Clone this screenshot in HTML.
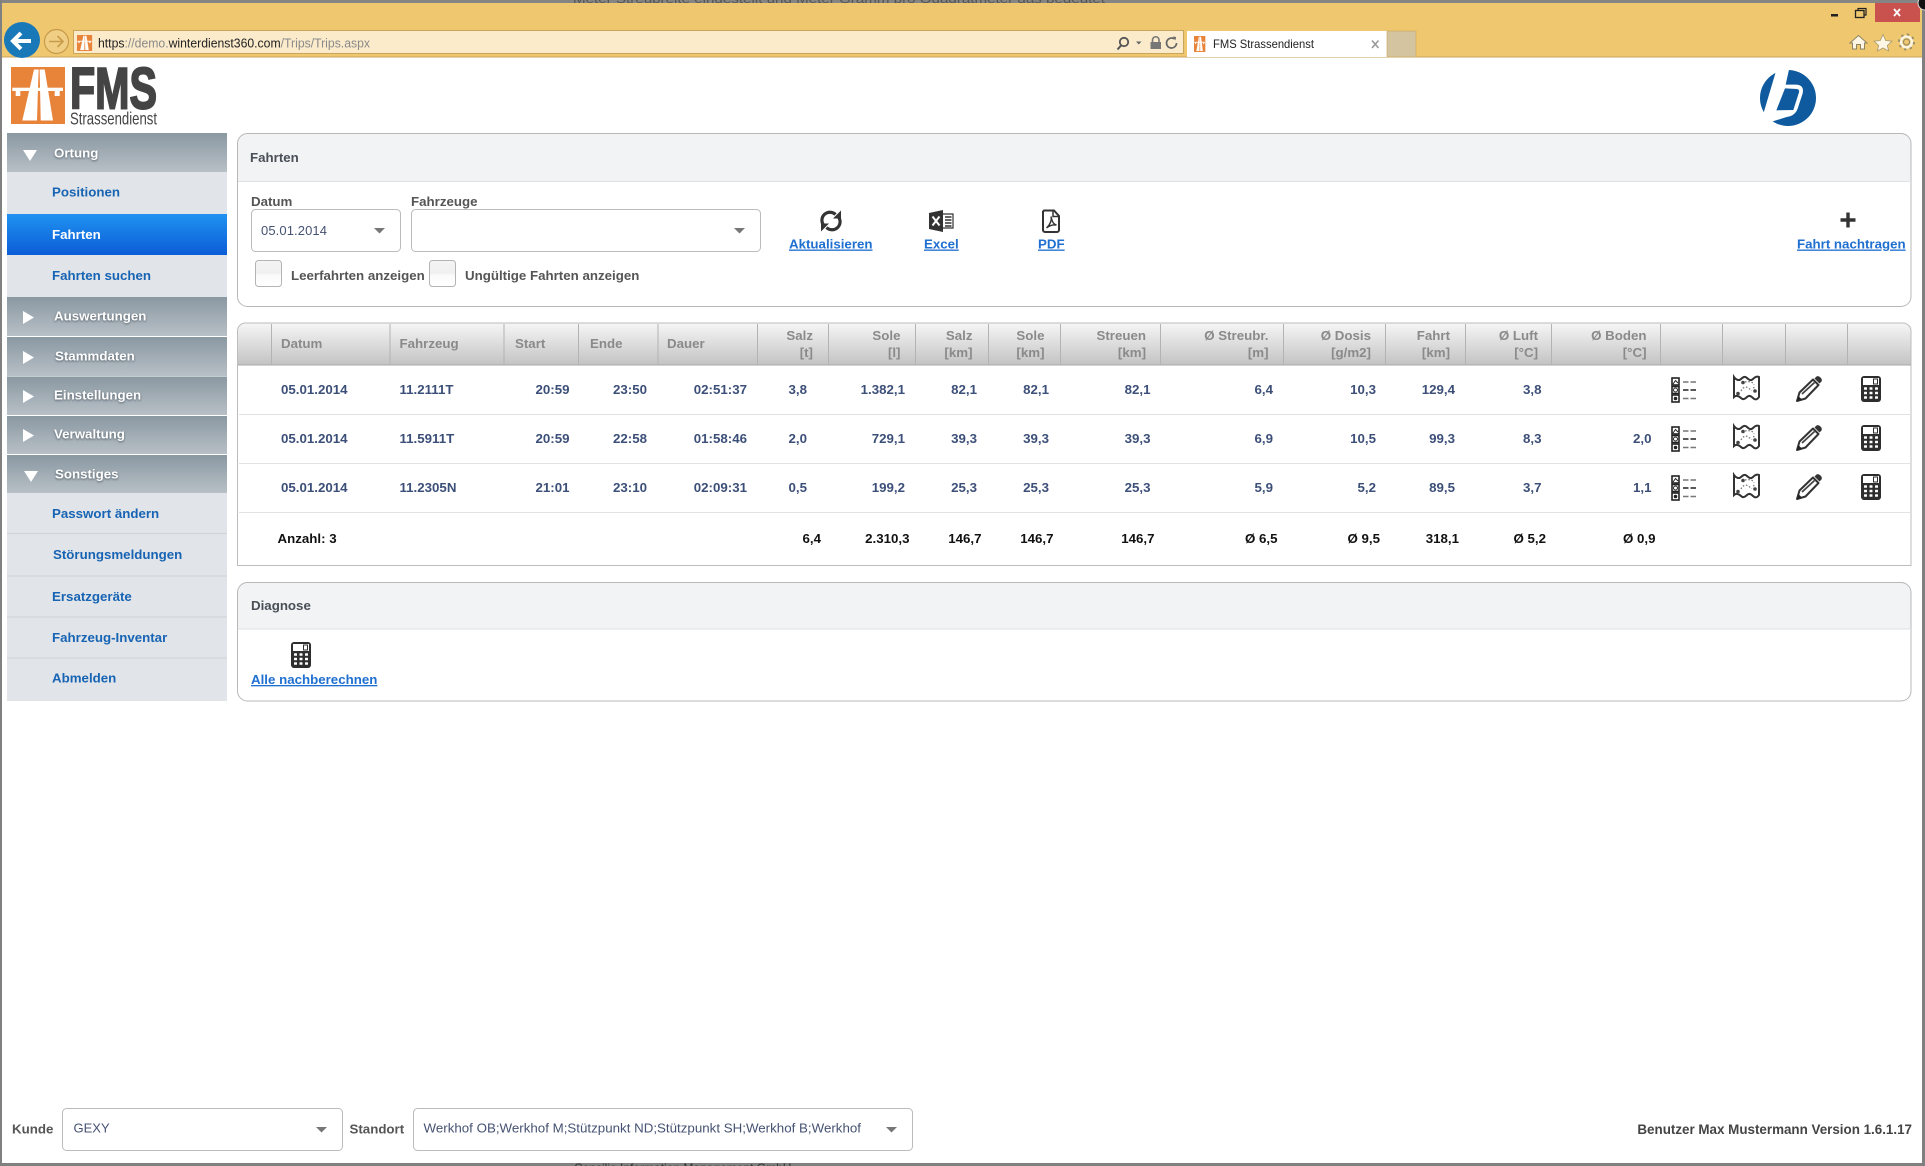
<!DOCTYPE html>
<html lang="de">
<head>
<meta charset="utf-8">
<title>FMS Strassendienst</title>
<style>
html,body{margin:0;padding:0;background:#fff;width:1925px;height:1166px;overflow:hidden}
svg{display:block;font-family:"Liberation Sans",Arial,sans-serif}
.b{font-weight:bold;font-size:13.3px}
.nav{fill:#1764b4}
.hd{fill:#fff;filter:drop-shadow(0 1px 1px rgba(50,60,70,.7))}
.th{fill:#8a8a8a}
.td{fill:#3c4f78}
.lk{fill:#1f6fd0;text-decoration:underline}
.lab{fill:#555}
.val{fill:#465273;font-size:13px}
</style>
</head>
<body>
<svg xmlns="http://www.w3.org/2000/svg" width="1925" height="1166" viewBox="0 0 1925 1166">
<defs>
<linearGradient id="gH" x1="0" y1="0" x2="0" y2="1"><stop offset="0" stop-color="#8a98a2"/><stop offset="1" stop-color="#b8c0c6"/></linearGradient>
<linearGradient id="gA" x1="0" y1="0" x2="0" y2="1"><stop offset="0" stop-color="#2092f2"/><stop offset="1" stop-color="#0b5dd6"/></linearGradient>
<linearGradient id="gT" x1="0" y1="0" x2="0" y2="1"><stop offset="0" stop-color="#f6f6f6"/><stop offset="1" stop-color="#c3c3c3"/></linearGradient>
<linearGradient id="gC" x1="0" y1="0" x2="0" y2="1"><stop offset="0" stop-color="#f4f4f4"/><stop offset=".5" stop-color="#f0f0f0"/><stop offset=".55" stop-color="#fafafa"/><stop offset="1" stop-color="#fff"/></linearGradient>
<g id="road">
<rect x="0" y="0" width="54" height="57" fill="#e8833a"/>
<path d="M23 2.500H33.700L42 53.500H11.300Z" fill="#fff"/>
<rect x="1.300" y="20.700" width="50.700" height="3.300" fill="#fff"/>
<rect x="4.700" y="24" width="4.600" height="5" fill="#fff"/>
<rect x="43.700" y="24" width="5" height="5" fill="#fff"/>
<path d="M27.700 2.500H28.600L29 20.700H27Z" fill="#e8833a"/>
<path d="M26.900 24H29.100L29.700 53.500H26Z" fill="#e8833a"/>
</g>
<g id="ilist">
<rect x="1" y="1" width="7" height="7" fill="#fff" stroke="#222" stroke-width="1.600"/>
<path d="M2 7L4.500 3.500 7 6" stroke="#222" fill="none"/>
<rect x="1" y="9.500" width="7" height="7" fill="#fff" stroke="#222" stroke-width="1.600"/>
<circle cx="4.500" cy="13" r="2" fill="none" stroke="#222"/>
<rect x="1" y="18" width="7" height="7" fill="#fff" stroke="#222" stroke-width="1.600"/>
<circle cx="4.500" cy="21.500" r="1.800" fill="#222"/>
<path d="M12 5H17.500M19.500 5H25" stroke="#777" stroke-width="1.400"/>
<path d="M12 13H17.500M19.500 13H25" stroke="#222" stroke-width="1.400"/>
<path d="M12 21.500H17.500M19.500 21.500H25" stroke="#777" stroke-width="1.400"/>
</g>
<g id="imap">
<path d="M1 2C3 5 6 6 8 4S12 1 14 3S18 6 20 4S24 1 26 2L26 22C24 25 22 25 20 23S16 20 14 22S10 25 8 23S3 20 1 22Z" fill="#fff" stroke="#333" stroke-width="2"/>
<circle cx="10" cy="7.500" r="1.800" fill="#444"/><circle cx="22" cy="16" r="1.800" fill="#444"/><circle cx="5" cy="18.500" r="1.800" fill="#444"/>
<path d="M12 7C17 6 20 7 21 10M20.500 12L21.500 14M8 16C10 12 13 11 16 13.500L19 15.500" fill="none" stroke="#777" stroke-width="1.300" stroke-dasharray="1.500 1.800"/>
</g>
<g id="ipen">
<path d="M1 25L3.500 16.500 17 3.500 22.500 9 9.500 22.500Z" fill="#fff" stroke="#333" stroke-width="2" stroke-linejoin="round"/>
<path d="M6 18L18.500 6.500" stroke="#444" stroke-width="1.800"/>
<path d="M1 25L2.400 20 6 23.600Z" fill="#222"/>
<path d="M18.500 2.500L20.500 0.500Q22.500 -0.500 24.500 1.500Q26.500 3.500 25.500 5.500L23.500 7.500Z" fill="#333"/>
</g>
<g id="icalc">
<rect x="0" y="0" width="20" height="26" rx="3" fill="#2e2e2e"/>
<rect x="2" y="2" width="16" height="7" fill="#fff"/>
<rect x="12.500" y="3" width="4" height="5" fill="#fff" stroke="#2e2e2e" stroke-width="1"/>
<g fill="#fff">
<rect x="3" y="11.200" width="3" height="2.600" rx=".6"/><rect x="8.500" y="11.200" width="3" height="2.600" rx=".6"/><rect x="14" y="11.200" width="3" height="2.600" rx=".6"/>
<rect x="3" y="15.700" width="3" height="2.600" rx=".6"/><rect x="8.500" y="15.700" width="3" height="2.600" rx=".6"/><rect x="14" y="15.700" width="3" height="2.600" rx=".6"/>
<rect x="3" y="20.200" width="3" height="2.600" rx=".6"/><rect x="8.500" y="20.200" width="3" height="2.600" rx=".6"/><rect x="14" y="20.200" width="3" height="2.600" rx=".6"/>
</g>
</g>
<g id="rowicons">
<use href="#ilist" x="1671" y="377"/>
<use href="#imap" x="1733" y="375"/>
<use href="#ipen" x="1796" y="376"/>
<use href="#icalc" x="1861" y="376"/>
</g>
<clipPath id="cBot"><rect x="0" y="1163" width="1925" height="3"/></clipPath>
<clipPath id="cTop"><rect x="0" y="0" width="1925" height="3"/></clipPath>
</defs>

<!-- window frame -->
<rect width="1925" height="1166" fill="#fff"/>
<rect x="0" y="0" width="1925" height="3" fill="#858585"/>
<text x="573" y="3" font-size="12" fill="#555" clip-path="url(#cTop)" textLength="532" lengthAdjust="spacingAndGlyphs">Meter Streubreite eingestellt und Meter Gramm pro Quadratmeter das bedeutet</text>
<rect x="0" y="0" width="2" height="1166" fill="#808080"/>
<rect x="1922" y="0" width="3" height="1166" fill="#808080"/>
<rect x="0" y="1163" width="1925" height="3" fill="#808080"/>
<text x="574" y="1172" font-size="12" fill="#333" clip-path="url(#cBot)">Consilio Information Management GmbH</text>

<!-- browser chrome -->
<rect x="2" y="3" width="1920" height="54" fill="#efc76f"/>
<rect x="2" y="56.500" width="1920" height="1" fill="#c9a65a"/>
<circle cx="22" cy="40" r="18" fill="#1878b8"/>
<path d="M13 41H31M21 33L13 41 21 49" fill="none" stroke="#fff" stroke-width="4"/>
<circle cx="56.500" cy="41.500" r="12" fill="#f0cf85" stroke="#c79b4a" stroke-width="1.200"/>
<path d="M49 41.500H63M57.500 36L63 41.500 57.500 47" fill="none" stroke="#c79b4a" stroke-width="1.600"/>
<rect x="73.500" y="30.500" width="1110" height="23" fill="#fbebcb" stroke="#c9a65a"/>
<use href="#road" transform="translate(77 35) scale(.28)"/>
<text x="98" y="47.500" font-size="12.500" textLength="272" lengthAdjust="spacingAndGlyphs" fill="#8a8a8a"><tspan fill="#222">https</tspan>://demo.<tspan fill="#222">winterdienst360.com</tspan>/Trips/Trips.aspx</text>
<circle cx="1124" cy="42" r="4.200" fill="none" stroke="#555" stroke-width="1.800"/>
<path d="M1121 45.500L1117.500 49.500" stroke="#555" stroke-width="2"/>
<path d="M1136 41.500h5.500l-2.750 3z" fill="#666"/>
<rect x="1150.500" y="42" width="10.500" height="7" fill="#777"/>
<path d="M1152.500 42V40a3.200 3.200 0 0 1 6.500 0V42" fill="none" stroke="#777" stroke-width="1.600"/>
<path d="M1176.500 43a5 5 0 1 1-2-4" fill="none" stroke="#666" stroke-width="1.700"/>
<path d="M1173 36.500l3 .5-.5 3.500z" fill="#666"/>
<rect x="1187" y="31" width="200" height="26" fill="#fff"/>
<rect x="1387" y="31" width="29" height="26" fill="#d4c49f" stroke="#c9a65a" stroke-width=".6"/>
<use href="#road" transform="translate(1194 36) scale(.21 .28)"/>
<text x="1213" y="48" font-size="12" textLength="101" lengthAdjust="spacingAndGlyphs" fill="#222">FMS Strassendienst</text>
<path d="M1372 40.500L1378.500 48M1378.500 40.500L1372 48" stroke="#999" stroke-width="1.600"/>
<rect x="1831" y="14" width="7" height="2.500" fill="#222"/>
<rect x="1855.500" y="10.500" width="8.500" height="7" fill="none" stroke="#222" stroke-width="1.300"/>
<path d="M1858 10.500V8.500H1866V15H1864" fill="none" stroke="#222" stroke-width="1.200"/>
<rect x="1875" y="3" width="45" height="19" fill="#c9524f"/>
<path d="M1894 9L1900 16M1900 9L1894 16" stroke="#fff" stroke-width="1.800"/>
<circle cx="1925" cy="3" r="7" fill="#111" stroke="#ddd" stroke-width="1"/>
<path d="M1850 43L1858.500 35.500 1867 43 1864.500 43 1864.500 49 1860.500 49 1860.500 44.500 1856.500 44.500 1856.500 49 1852.500 49 1852.500 43Z" fill="#fdf6e4" stroke="#8d8566" stroke-width="1"/>
<path d="M1883 34.500L1885.700 40.500 1892 41.200 1887.300 45.500 1888.700 51 1883 48 1877.300 51 1878.700 45.500 1874 41.200 1880.300 40.500Z" fill="#fdf6e4" stroke="#a99b70" stroke-width=".8"/>
<circle cx="1906.500" cy="42" r="5.500" fill="none" stroke="#fdf6e4" stroke-width="2.500"/>
<circle cx="1906.500" cy="42" r="7.500" fill="none" stroke="#9d9068" stroke-width="2" stroke-dasharray="2.500 3.400"/>
<circle cx="1906.500" cy="42" r="3" fill="none" stroke="#8d8566" stroke-width="1"/>

<!-- logo -->
<use href="#road" transform="translate(11 67)"/>
<text x="70" y="108.500" font-size="58" font-weight="bold" fill="#444" stroke="#444" stroke-width="2" textLength="87" lengthAdjust="spacingAndGlyphs">FMS</text>
<text x="70" y="124.500" font-size="17.500" fill="#444" textLength="87" lengthAdjust="spacingAndGlyphs">Strassendienst</text>
<g transform="translate(1740 60) scale(.3333)">
<circle cx="144" cy="114" r="84" fill="#0f5a9e"/>
<path d="M112 20L149 20 137 74 170 74Q193 76 188 100L173 146Q165 168 140 171L92 186 68 168Z" fill="#fff"/>
<path d="M135 85L172 87Q179 90 177 97L160 150 109 151Z" fill="#0f5a9e"/>
</g>

<!-- sidebar -->
<rect x="7" y="133" width="220" height="39" fill="url(#gH)"/>
<rect x="7" y="172" width="220" height="42" fill="#e1e4e8"/>
<rect x="7" y="214" width="220" height="41" fill="url(#gA)"/>
<rect x="7" y="255" width="220" height="42" fill="#e1e4e8"/>
<rect x="7" y="297" width="220" height="39" fill="url(#gH)"/>
<rect x="7" y="337" width="220" height="39" fill="url(#gH)"/>
<rect x="7" y="376.500" width="220" height="38.500" fill="url(#gH)"/>
<rect x="7" y="416" width="220" height="38" fill="url(#gH)"/>
<rect x="7" y="455" width="220" height="38" fill="url(#gH)"/>
<rect x="7" y="493" width="220" height="208" fill="#e1e4e8"/>
<g fill="#d0d3d6">
<rect x="7" y="533" width="220" height="1"/><rect x="7" y="575.500" width="220" height="1"/><rect x="7" y="616.500" width="220" height="1"/><rect x="7" y="657.500" width="220" height="1"/>
</g>
<g fill="#fff">
<path d="M23 150H37L30 161Z"/>
<path d="M23 311L34 317.500 23 324Z"/>
<path d="M23 351L34 357.500 23 364Z"/>
<path d="M23 390L34 396.500 23 403Z"/>
<path d="M23 429L34 435.500 23 442Z"/>
<path d="M24 471H38L31 482Z"/>
</g>
<g class="b hd">
<text x="54" y="157.500">Ortung</text>
<text x="54" y="320.500">Auswertungen</text>
<text x="55" y="360.500">Stammdaten</text>
<text x="54" y="399.500">Einstellungen</text>
<text x="54" y="438.500">Verwaltung</text>
<text x="55" y="478.500">Sonstiges</text>
</g>
<g class="b nav">
<text x="52" y="196.500">Positionen</text>
<text x="52" y="280">Fahrten suchen</text>
<text x="52" y="518">Passwort ändern</text>
<text x="53" y="559">Störungsmeldungen</text>
<text x="52" y="601">Ersatzgeräte</text>
<text x="52" y="642">Fahrzeug-Inventar</text>
<text x="52" y="682.500">Abmelden</text>
</g>
<text x="52" y="239" class="b" fill="#fff">Fahrten</text>

<!-- Fahrten panel -->
<path d="M238 181V143a10 10 0 0 1 10-10H1901a10 10 0 0 1 10 10V181Z" fill="#f1f3f5"/>
<rect x="237.500" y="133.500" width="1673.500" height="173" rx="10" fill="none" stroke="#b8b8b8"/>
<rect x="238" y="181" width="1673" height="1" fill="#dfe2e4"/>
<text x="250" y="162" class="b" fill="#4a4f57">Fahrten</text>
<text x="251" y="206" class="b lab">Datum</text>
<text x="411" y="206" class="b lab">Fahrzeuge</text>
<rect x="251.500" y="209.500" width="149" height="42" rx="4" fill="#fff" stroke="#bbb"/>
<text x="261" y="235" class="val" textLength="66" lengthAdjust="spacing">05.01.2014</text>
<path d="M374 228H385L379.500 233.500Z" fill="#777"/>
<rect x="411.500" y="209.500" width="349" height="42" rx="4" fill="#fff" stroke="#bbb"/>
<path d="M734 228H745L739.500 233.500Z" fill="#777"/>
<rect x="255.500" y="260.500" width="26" height="26" rx="3" fill="url(#gC)" stroke="#b4b4b4"/>
<rect x="429.500" y="260.500" width="26" height="26" rx="3" fill="url(#gC)" stroke="#b4b4b4"/>
<text x="291" y="280" class="b lab">Leerfahrten anzeigen</text>
<text x="465" y="280" class="b lab">Ungültige Fahrten anzeigen</text>

<!-- toolbar -->
<g fill="#333">
<path d="M823.500 225A8 8 0 0 1 835.500 214.500M838.500 217A8 8 0 0 1 826.500 227.500" fill="none" stroke="#333" stroke-width="3.200"/>
<path d="M841 218.500V210.500L833 218.500Z"/>
<path d="M821 223.500V231.500L829 223.500Z"/>
<path d="M929 213L943 210V232L929 229Z"/>
</g>
<path d="M932.500 216.500L939.500 225.500M939.500 216.500L932.500 225.500" stroke="#fff" stroke-width="2"/>
<path d="M943 214H953V228H943" fill="#fff" stroke="#333" stroke-width="1.200"/>
<path d="M945 217H951.500M945 220H951.500M945 223H951.500M945 226H951.500" stroke="#333" stroke-width="1.600"/>
<path d="M1044 210.500H1054L1059 216V230a2 2 0 0 1-2 2H1045a2 2 0 0 1-2-2V211.500Z" fill="#fff" stroke="#333" stroke-width="2"/>
<path d="M1053 210.500V216.500H1059" fill="none" stroke="#333" stroke-width="1.500"/>
<path d="M1046.500 228C1050 225 1052 220 1051 216.500C1052 221 1053 224 1056.500 225C1053 224.500 1049.500 225.500 1046.500 228Z" fill="none" stroke="#333" stroke-width="1.400"/>
<path d="M1848 212.500V227.500M1840.500 220H1855.500" stroke="#333" stroke-width="3.400"/>
<text x="789" y="248.500" class="b lk">Aktualisieren</text>
<text x="924" y="248.500" class="b lk">Excel</text>
<text x="1038" y="248.500" class="b lk">PDF</text>
<text x="1797" y="248.500" class="b lk">Fahrt nachtragen</text>

<!-- table -->
<path d="M238 365V331a8 8 0 0 1 8-8H1903a8 8 0 0 1 8 8V365Z" fill="url(#gT)"/>
<path d="M237.500 365V331a8 8 0 0 1 8-8H1903a8 8 0 0 1 8 8V565.500H237.500Z" fill="none" stroke="#bcbcbc"/>
<rect x="238" y="364.500" width="1673" height="1" fill="#a9a9a9"/>
<g fill="#e2e2e2">
<rect x="239" y="414" width="1672" height="1"/><rect x="239" y="463" width="1672" height="1"/><rect x="239" y="512" width="1672" height="1"/>
</g>
<g fill="#b3b3b3">
<rect x="271" y="324" width="1" height="41"/><rect x="389.500" y="324" width="1" height="41"/><rect x="503.500" y="324" width="1" height="41"/><rect x="578" y="324" width="1" height="41"/><rect x="657.500" y="324" width="1" height="41"/><rect x="757" y="324" width="1" height="41"/><rect x="828" y="324" width="1" height="41"/><rect x="915" y="324" width="1" height="41"/><rect x="988" y="324" width="1" height="41"/><rect x="1060" y="324" width="1" height="41"/><rect x="1160" y="324" width="1" height="41"/><rect x="1283" y="324" width="1" height="41"/><rect x="1385" y="324" width="1" height="41"/><rect x="1465" y="324" width="1" height="41"/><rect x="1551" y="324" width="1" height="41"/><rect x="1660" y="324" width="1" height="41"/><rect x="1722" y="324" width="1" height="41"/><rect x="1785" y="324" width="1" height="41"/><rect x="1847" y="324" width="1" height="41"/>
</g>
<g class="b th">
<text x="281" y="348">Datum</text>
<text x="399.500" y="348">Fahrzeug</text>
<text x="515" y="348">Start</text>
<text x="590" y="348">Ende</text>
<text x="667" y="348">Dauer</text>
<g text-anchor="end">
<text x="813" y="340">Salz</text><text x="813" y="357">[t]</text>
<text x="900.500" y="340">Sole</text><text x="900.500" y="357">[l]</text>
<text x="972.500" y="340">Salz</text><text x="972.500" y="357">[km]</text>
<text x="1044.500" y="340">Sole</text><text x="1044.500" y="357">[km]</text>
<text x="1146" y="340">Streuen</text><text x="1146" y="357">[km]</text>
<text x="1268.500" y="340">Ø Streubr.</text><text x="1268.500" y="357">[m]</text>
<text x="1371" y="340">Ø Dosis</text><text x="1371" y="357">[g/m2]</text>
<text x="1450" y="340">Fahrt</text><text x="1450" y="357">[km]</text>
<text x="1538" y="340">Ø Luft</text><text x="1538" y="357">[°C]</text>
<text x="1646.500" y="340">Ø Boden</text><text x="1646.500" y="357">[°C]</text>
</g>
</g>
<g class="b td">
<text x="281" y="394">05.01.2014</text><text x="399.500" y="394">11.2111T</text>
<text x="281" y="443">05.01.2014</text><text x="399.500" y="443">11.5911T</text>
<text x="281" y="492">05.01.2014</text><text x="399.500" y="492">11.2305N</text>
<g text-anchor="end">
<text x="569.500" y="394">20:59</text><text x="647" y="394">23:50</text><text x="747" y="394">02:51:37</text><text x="807" y="394">3,8</text><text x="905" y="394">1.382,1</text><text x="977" y="394">82,1</text><text x="1049" y="394">82,1</text><text x="1150.500" y="394">82,1</text><text x="1273" y="394">6,4</text><text x="1376" y="394">10,3</text><text x="1455" y="394">129,4</text><text x="1541.500" y="394">3,8</text>
<text x="569.500" y="443">20:59</text><text x="647" y="443">22:58</text><text x="747" y="443">01:58:46</text><text x="807" y="443">2,0</text><text x="905" y="443">729,1</text><text x="977" y="443">39,3</text><text x="1049" y="443">39,3</text><text x="1150.500" y="443">39,3</text><text x="1273" y="443">6,9</text><text x="1376" y="443">10,5</text><text x="1455" y="443">99,3</text><text x="1541.500" y="443">8,3</text><text x="1651.500" y="443">2,0</text>
<text x="569.500" y="492">21:01</text><text x="647" y="492">23:10</text><text x="747" y="492">02:09:31</text><text x="807" y="492">0,5</text><text x="905" y="492">199,2</text><text x="977" y="492">25,3</text><text x="1049" y="492">25,3</text><text x="1150.500" y="492">25,3</text><text x="1273" y="492">5,9</text><text x="1376" y="492">5,2</text><text x="1455" y="492">89,5</text><text x="1541.500" y="492">3,7</text><text x="1651.500" y="492">1,1</text>
</g>
</g>
<g class="b" fill="#111">
<text x="277.500" y="543">Anzahl: 3</text>
<g text-anchor="end">
<text x="821" y="543">6,4</text><text x="909.500" y="543">2.310,3</text><text x="981.500" y="543">146,7</text><text x="1053.500" y="543">146,7</text><text x="1154.500" y="543">146,7</text><text x="1277.500" y="543">Ø 6,5</text><text x="1380" y="543">Ø 9,5</text><text x="1459" y="543">318,1</text><text x="1546" y="543">Ø 5,2</text><text x="1655.500" y="543">Ø 0,9</text>
</g>
</g>
<use href="#rowicons"/>
<use href="#rowicons" y="49"/>
<use href="#rowicons" y="98"/>

<!-- Diagnose panel -->
<path d="M237.500 629V592a10 10 0 0 1 10-10H1901a10 10 0 0 1 10 10V629Z" fill="#f1f3f5"/>
<rect x="237.500" y="582.500" width="1673.500" height="118.500" rx="10" fill="none" stroke="#b8b8b8"/>
<rect x="238" y="628.500" width="1673" height="1" fill="#dfe2e4"/>
<text x="251" y="610" class="b" fill="#4a4f57">Diagnose</text>
<use href="#icalc" x="291" y="642"/>
<text x="251" y="684" class="b lk">Alle nachberechnen</text>

<!-- footer -->
<text x="12" y="1133.500" class="b lab">Kunde</text>
<rect x="62.500" y="1108.500" width="280" height="42" rx="4" fill="#fff" stroke="#bbb"/>
<text x="73.500" y="1132.500" class="val">GEXY</text>
<path d="M316 1127H327L321.500 1132.500Z" fill="#777"/>
<text x="349.500" y="1133.500" class="b lab">Standort</text>
<rect x="413.500" y="1108.500" width="499" height="42" rx="4" fill="#fff" stroke="#bbb"/>
<text x="423.500" y="1132.500" class="val" textLength="437.500" lengthAdjust="spacingAndGlyphs">Werkhof OB;Werkhof M;Stützpunkt ND;Stützpunkt SH;Werkhof B;Werkhof</text>
<path d="M886 1127H897L891.500 1132.500Z" fill="#777"/>
<text x="1912" y="1134" class="b" style="font-size:13.400px" text-anchor="end" fill="#444">Benutzer Max Mustermann Version 1.6.1.17</text>
</svg>
</body>
</html>
